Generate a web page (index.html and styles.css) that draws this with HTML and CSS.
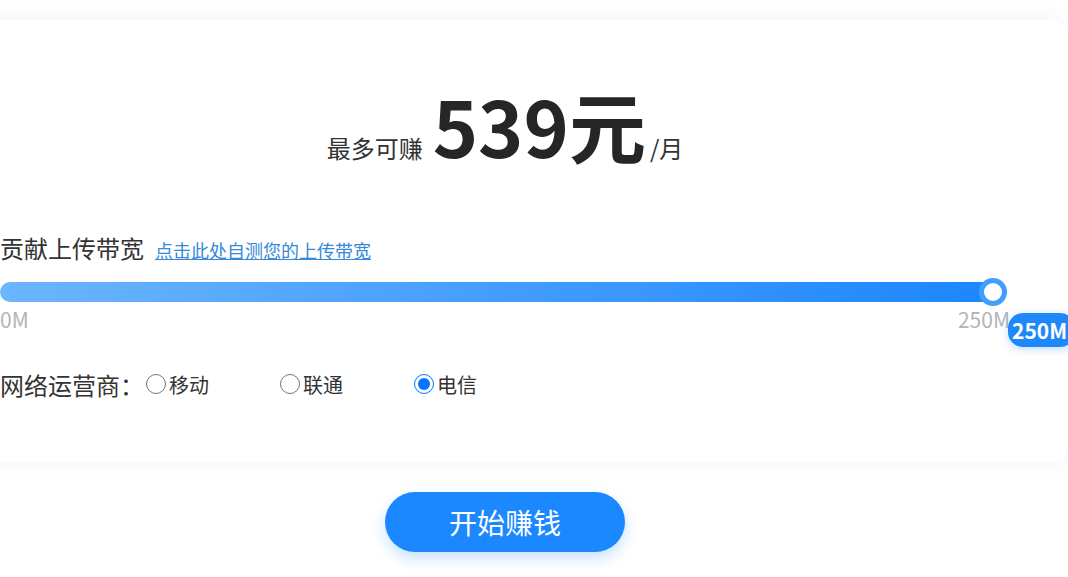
FILE: index.html
```html
<!DOCTYPE html>
<html lang="zh-CN">
<head>
<meta charset="utf-8">
<title>开始赚钱</title>
<link rel="stylesheet" href="styles.css">
</head>
<body>
<div class="page">
  <section class="card">
    <div class="headline">
      <span class="pre">最多可赚</span>
      <span class="amount">539元</span>
      <span class="unit">/月</span>
    </div>
    <div class="title-row">
      <span class="title">贡献上传带宽</span>
      <a class="link" href="#">点击此处自测您的上传带宽</a>
    </div>
    <div class="slider">
      <div class="runway">
        <div class="bar"></div>
        <div class="thumb"></div>
      </div>
      <div class="scale">
        <span>0M</span>
        <span>250M</span>
      </div>
      <div class="tip">250M</div>
    </div>
    <div class="isp-row">
      <span class="isp-label">网络运营商：</span>
      <label class="opt"><input type="radio" name="isp">移动</label>
      <label class="opt"><input type="radio" name="isp">联通</label>
      <label class="opt"><input type="radio" name="isp" checked>电信</label>
    </div>
  </section>
  <div class="actions">
    <button class="start">开始赚钱</button>
  </div>
</div>
</body>
</html>
```
FILE: styles.css
```css
html, body {
  margin: 0;
  padding: 0;
  background: #ffffff;
  overflow: hidden;
}
body {
  font-family: "Noto Sans CJK SC", "Noto Sans", sans-serif;
  color: #333333;
  width: 1068px;
  height: 577px;
}
.page {
  padding-top: 20px;
}
.card {
  box-sizing: border-box;
  width: 1126px;
  height: 442px;
  margin-left: -58px;
  padding: 0 58px;
  background: #ffffff;
  border-radius: 16px;
  box-shadow: 0 0 24px rgba(40, 80, 160, 0.07);
}
.headline {
  display: flex;
  justify-content: center;
  align-items: baseline;
  padding-top: 66px;
  height: 88px;
}
.pre {
  font-size: 24px;
  color: #333;
  margin-right: 10px;
}
.amount {
  font-size: 77px;
  font-weight: 700;
  color: #262626;
  line-height: 1;
}
.unit {
  font-size: 24px;
  color: #333;
  margin-left: 4px;
}
.title-row {
  display: flex;
  align-items: baseline;
  margin-top: 56px;
  height: 30px;
}
.title {
  font-size: 24px;
  color: #333;
}
.link {
  font-size: 18px;
  color: #3589d8;
  margin-left: 11px;
  text-decoration: underline;
}
.slider {
  position: relative;
  margin-top: 22px;
  width: 1010px;
}
.runway {
  position: relative;
  width: 993px;
  height: 20px;
}
.bar {
  height: 20px;
  border-radius: 10px;
  background: linear-gradient(90deg, #6cb5ff 0%, #1d86fd 100%);
}
.thumb {
  position: absolute;
  left: 100%;
  top: 50%;
  width: 18px;
  height: 18px;
  margin: -14px 0 0 -14px;
  border: 5px solid #409eff;
  border-radius: 50%;
  background: #fff;
}
.scale {
  display: flex;
  justify-content: space-between;
  font-size: 21px;
  color: #b1b4ba;
  line-height: 26px;
  margin-top: 4px;
}
.tip {
  position: absolute;
  left: 1008px;
  top: 31px;
  height: 34px;
  padding: 0 8px 0 4px;
  line-height: 34px;
  background: #1e88fb;
  color: #fff;
  font-size: 21px;
  font-weight: 700;
  border-radius: 15px;
  box-shadow: 0 2px 8px rgba(30, 136, 251, 0.3);
}
.isp-row {
  display: flex;
  align-items: center;
  margin-top: 35px;
  height: 34px;
}
.isp-label {
  font-size: 24px;
  color: #333;
  margin-right: 2px;
}
.opt {
  display: flex;
  align-items: center;
  font-size: 20px;
  color: #333;
  width: 134px;
}
.opt input {
  width: 20px;
  height: 20px;
  margin: 0 3px 0 0;
}
.actions {
  display: flex;
  justify-content: center;
  padding-right: 58px;
  margin-top: 30px;
}
.start {
  width: 240px;
  height: 60px;
  border: none;
  border-radius: 30px;
  background: #1b88ff;
  color: #fff;
  font-family: "Noto Sans CJK SC", sans-serif;
  font-size: 28px;
  box-shadow: 0 6px 14px rgba(27, 136, 255, 0.25);
}
```
